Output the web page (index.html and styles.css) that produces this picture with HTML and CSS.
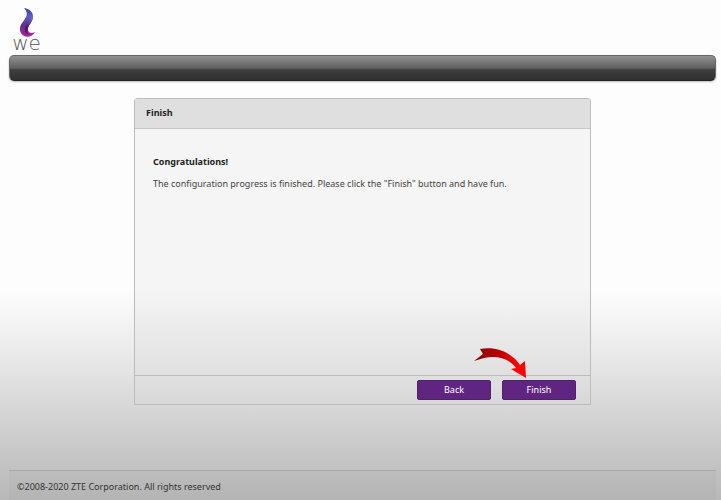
FILE: index.html
```html
<!DOCTYPE html>
<html lang="en">
<head>
    <meta charset="UTF-8">
    <meta name="viewport" content="width=device-width, initial-scale=1.0">
    <title>Finish</title>
    <link rel="stylesheet" href="styles.css">
</head>
<body>
    <header>
        <div class="logo">
            <svg class="logo-mark" viewBox="0 0 16 30" width="16" height="30" aria-hidden="true">
                <defs>
                    <linearGradient id="flame" x1="0" y1="0" x2="0" y2="1">
                        <stop offset="0" stop-color="#39409a"/>
                        <stop offset="0.3" stop-color="#5a5fc4"/>
                        <stop offset="0.6" stop-color="#6a2a92"/>
                        <stop offset="1" stop-color="#b0229a"/>
                    </linearGradient>
                    <linearGradient id="flame-dark" x1="0" y1="0" x2="0" y2="1">
                        <stop offset="0" stop-color="#9a9ae0"/>
                        <stop offset="0.6" stop-color="#3c1f6e"/>
                        <stop offset="1" stop-color="#5a1a6c"/>
                    </linearGradient>
                </defs>
                <path fill="url(#flame)" d="M5 0C11 1 15 5 14 10C13 15 9 17 9 21C9 25 12 26 16 24C14 28 9 30 5 28C0 25 0 19 3 15C6 11 11 6 5 0Z"/>
                <path fill="url(#flame-dark)" d="M13 6C14 12 6 15 6 20C5 24 8 27 11 27C8 27 8 24 9 20C10 16 15 13 13 6Z"/>
            </svg>
            <span class="logo-name">we</span>
        </div>
        <div class="bar"></div>
    </header>

    <main>
        <section class="panel">
            <h1 class="panel-title">Finish</h1>
            <div class="panel-body">
                <h2>Congratulations!</h2>
                <p>The configuration progress is finished. Please click the "Finish" button and have fun.</p>
            </div>
            <div class="panel-buttons">
                <button type="button" class="btn">Back</button>
                <div class="pointed">
                    <button type="button" class="btn">Finish</button>
                    <svg class="arrow" viewBox="0 0 54 30" width="54" height="30" aria-hidden="true">
                        <defs>
                            <linearGradient id="red" x1="0" y1="0" x2="1" y2="0">
                                <stop offset="0" stop-color="#8c0000"/>
                                <stop offset="0.5" stop-color="#b80000"/>
                                <stop offset="0.8" stop-color="#fa0505"/>
                            </linearGradient>
                        </defs>
                        <path fill="url(#red)" d="M6 1C24 -2 39 6 46 17L51 13L52 30L37 21L42 20C35 10 22 7 10 10L0 13L9 6Z"/>
                    </svg>
                </div>
            </div>
        </section>
    </main>

    <footer>©2008-2020 ZTE Corporation. All rights reserved</footer>
</body>
</html>
```

FILE: styles.css
```css
* {
    box-sizing: border-box;
}
body {
    display: flex;
    flex-direction: column;
    min-height: 100vh;
    margin: 0;
    padding: 0 5px 0 9px;
    background: linear-gradient(#fdfdfd 0, #fdfdfd 58%, #ebebeb 70%, #d6d6d6 82%, #c3c3c3 93%, #b8b8b8 100%);
    font-family: "Noto Sans", "Open Sans", sans-serif;
    font-size: 9px;
    line-height: 12px;
    color: #444;
}

/* logo and top bar */
.logo {
    display: flex;
    flex-direction: column;
    align-items: center;
    width: 35px;
    height: 55px;
    padding-top: 8px;
}
.logo-mark {
    flex: none;
}
.logo-name {
    font-family: "DejaVu Sans", sans-serif;
    font-weight: 200;
    font-size: 20px;
    line-height: 11px;
    color: #555;
}
.bar {
    height: 26px;
    border: 1px solid #666;
    border-bottom-color: #222;
    border-radius: 5px;
    background: linear-gradient(#919191, #606060 50%, #3e3e3e 58%, #303030);
    box-shadow: 0 1px 2px #bbb;
}

/* panel */
main {
    flex: 1;
    padding: 17px 0;
}
.panel {
    max-width: 457px;
    margin: 0 auto;
    border: 1px solid #bcbcbc;
    border-radius: 3px 3px 0 0;
    background: linear-gradient(#f5f5f5 0, #f5f5f5 62%, #e2e2e2 88%, #d8d8d8 100%);
}
.panel-title {
    margin: 0;
    padding: 8px 11px 9px;
    border-bottom: 1px solid #c8c8c8;
    background-color: #dfdfdf;
    font-size: 9px;
    line-height: 12px;
    color: #222;
}
.panel-body {
    min-height: 247px;
    padding: 27px 18px;
    border-bottom: 1px solid #bcbcbc;
}
.panel-body h2 {
    margin: 0 0 10px;
    font-size: 9px;
    color: #222;
}
.panel-body p {
    margin: 0;
}
.panel-buttons {
    display: flex;
    justify-content: flex-end;
    gap: 11px;
    padding: 4px 14px;
}
.btn {
    display: block;
    width: 74px;
    height: 20px;
    padding: 0;
    border: 1px solid #50206c;
    border-radius: 2px;
    background-color: #602481;
    font: inherit;
    color: #fff;
    cursor: pointer;
}
.btn:hover {
    background-color: #733094;
}

/* arrow lies over the panel and points at the button */
.pointed {
    position: relative;
}
.arrow {
    position: absolute;
    right: 48px;
    bottom: 22px;
    pointer-events: none;
}

footer {
    padding: 10px 8px 7px;
    border-top: 1px solid #a8a8a8;
    background-color: rgba(0, 0, 0, 0.02);
    color: #333;
}
```
